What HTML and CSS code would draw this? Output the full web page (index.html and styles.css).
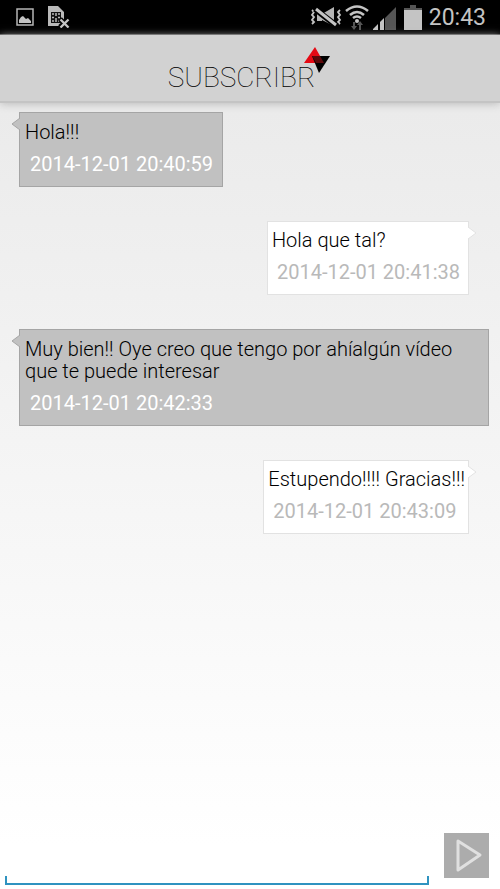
FILE: index.html
```html
<!DOCTYPE html>
<html lang="es">
<head>
<meta charset="utf-8">
<meta name="viewport" content="width=device-width, initial-scale=1">
<title>Subscribr</title>
<link rel="stylesheet" href="styles.css">
</head>
<body>
<div class="status">
  <svg class="picture" width="18" height="18" viewBox="0 0 18 18" aria-hidden="true"><path d="M1 1h16v16H1z" fill="none" stroke="#b5b5b5" stroke-width="1.500"/><path d="M3 15v-3l2-3 2-1 3 3 2-1 3 3v2z" fill="#c4c4c4"/></svg>
  <svg class="sim" width="22" height="23" viewBox="0 0 22 23" aria-hidden="true"><path d="M0 1h10l6 6v14H0z" fill="#b9b9b9"/><path d="M3 7h10v11H3z" fill="#111"/><path d="M4 9h2M4 12.500h2M4 16h2M10 9h2M10 12.500h2M10 16h2M8 8v3M8 13v4" stroke="#b9b9b9" stroke-width="1.500"/><path d="M12 14l8 8M20 14l-8 8" stroke="#000" stroke-width="5"/><path d="M12.500 14.500l8 8M20.500 14.500l-8 8" stroke="#c4c4c4" stroke-width="2.300"/></svg>
  <div class="indicators">
    <svg width="32" height="22" viewBox="0 0 32 22" aria-hidden="true"><path d="M2 4l2 2-2 3 2 2-2 3 2 2-2 2M30 4l-2 2 2 3-2 2 2 3-2 2 2 2" fill="none" stroke="#c4c4c4" stroke-width="1.800"/><path d="M7 6h5v9H7zM12 8l12-7v19l-12-6z" fill="#b5b5b5"/><path d="M5 3l22 17" stroke="#000" stroke-width="6"/><path d="M6 3l20 16" stroke="#c4c4c4" stroke-width="3"/></svg>
    <svg width="24" height="26" viewBox="0 0 24 26" aria-hidden="true"><path d="M1 6q11-9 22 0M5 10q7-6 14 0M8 13q4-3 8 0" fill="none" stroke="#c4c4c4" stroke-width="2.600"/><circle cx="12" cy="16" r="2" fill="#c4c4c4"/><path d="M9 17v6M15 25v-6" stroke="#555" stroke-width="2"/><path d="M6 21h6l-3 4zM12 20h6l-3-4z" fill="#555"/></svg>
    <svg width="23" height="23" viewBox="0 0 23 23" aria-hidden="true"><path d="M0 23v-1l5-5v6zM7 23v-8l4-4v12z" fill="#c4c4c4"/><path d="M12 23V11L23 0v23z" fill="#555"/></svg>
    <svg width="18" height="26" viewBox="0 0 18 26" aria-hidden="true"><path d="M6 1h6v3h6v3H0V4h6z" fill="#555"/><path d="M0 6h18v20H0z" fill="#c4c4c4"/></svg>
    <time>20:43</time>
  </div>
</div>
<header class="header">
  <h1 class="brand">SUBSCRIBR<svg class="mark" width="26" height="26" viewBox="0 0 26 26" aria-hidden="true"><path d="M11 0l9 16H0z" fill="#e50914"/><path d="M8 9h18L15 26z" fill="#000"/><path d="M8 9h8l4 7h-8z" fill="#5c080a"/></svg></h1>
</header>
<main class="chat">
  <article class="bubble received"><svg class="tip" width="9" height="14" viewBox="0 0 9 14" aria-hidden="true"><path d="M9 1L1 7l8 6"/></svg><p>Hola!!!</p><time>2014-12-01 20:40:59</time></article>
  <article class="bubble sent"><svg class="tip" width="9" height="14" viewBox="0 0 9 14" aria-hidden="true"><path d="M0 1l8 6-8 6"/></svg><p>Hola que tal?</p><time>2014-12-01 20:41:38</time></article>
  <article class="bubble received"><svg class="tip" width="9" height="14" viewBox="0 0 9 14" aria-hidden="true"><path d="M9 1L1 7l8 6"/></svg><p>Muy bien!! Oye creo que tengo por ahíalgún vídeo que te puede interesar</p><time>2014-12-01 20:42:33</time></article>
  <article class="bubble sent"><svg class="tip" width="9" height="14" viewBox="0 0 9 14" aria-hidden="true"><path d="M0 1l8 6-8 6"/></svg><p>Estupendo!!!! Gracias!!!</p><time>2014-12-01 20:43:09</time></article>
</main>
<form class="composer">
  <div class="field"><input type="text" aria-label="Mensaje"></div>
  <button type="button" aria-label="Enviar"><svg width="27" height="35" viewBox="0 0 27 35" aria-hidden="true"><path d="M3 3v29l22-15z" fill="none" stroke="#e0e0e0" stroke-width="3" stroke-linejoin="round"/></svg></button>
</form>
</body>
</html>
```
FILE: styles.css
```css
* { box-sizing: border-box; }
body {
  margin: 0;
  min-height: 100vh;
  display: flex;
  flex-direction: column;
  font: 300 20px/22px Roboto, sans-serif;
  color: #000;
  background: linear-gradient(#e8e8e8, #fff 95%);
}
.status {
  display: flex;
  align-items: flex-start;
  height: 35px;
  padding: 4px 14px 0 16px;
  background: #000;
  border-bottom: 1px solid #555;
}
.picture { margin-top: 4px; }
.sim { margin: 1px 0 0 14px; }
.indicators {
  display: flex;
  align-items: flex-end;
  gap: 6px;
  margin-left: auto;
  color: #c4c4c4;
}
.indicators time { font-size: 23px; line-height: 26px; font-weight: 400; }
.indicators svg:first-child { margin: 0 -3px 3px 0; }
.indicators svg:nth-child(3) { margin: 0 0 1px -2px; }
.indicators svg:nth-child(4) { margin: 0 1px 1px 2px; }
.header {
  display: flex;
  justify-content: center;
  height: 68px;
  padding: 28px 17px 0 0;
  background: #d2d2d2;
  border-bottom: 2px solid #c4c4c4;
  box-shadow: 0 1px 8px #bbb;
}
.brand {
  position: relative;
  margin: 0;
  font-size: 28px;
  line-height: 30px;
  font-weight: 100;
}
.mark { position: absolute; right: -15px; top: -16px; }
.chat {
  flex: 1;
  display: flex;
  flex-direction: column;
  align-items: flex-start;
  gap: 34px;
  padding: 9px 11px 9px 19px;
}
.bubble {
  position: relative;
  border: 1px solid #a5a5a5;
  padding: 8px 4px 11px 5px;
}
.bubble p { margin: 0 0 10px; }
.bubble time { display: block; padding: 0 5px; font-weight: 400; }
.received { background: #c1c1c1; }
.received time { color: #fff; }
.sent {
  align-self: flex-end;
  margin-right: 20px;
  padding: 7px 3px 11px 4px;
  background: #fff;
  border-color: #e2e2e2;
}
.sent time { color: #b9b9b9; }
.tip { position: absolute; top: 4px; }
.received .tip { left: -9px; fill: #c1c1c1; stroke: #a5a5a5; }
.sent .tip { right: -9px; fill: #fff; stroke: #e2e2e2; }
.composer {
  display: flex;
  align-items: flex-end;
  gap: 15px;
  padding: 0 11px 4px 5px;
}
.field {
  position: relative;
  flex: 1;
  min-width: 0;
}
.field input {
  display: block;
  width: 100%;
  height: 40px;
  padding: 0 8px;
  border: 0;
  outline: 0;
  background: none;
  font: inherit;
}
.field::after {
  content: "";
  position: absolute;
  inset: auto 0 0;
  height: 7px;
  border: 2px solid #2f93c0;
  border-top: 0;
}
.composer button {
  display: grid;
  place-items: center;
  width: 45px;
  height: 45px;
  margin-bottom: 7px;
  padding: 0 0 0 3px;
  border: 0;
  background: #acacac;
}
```
